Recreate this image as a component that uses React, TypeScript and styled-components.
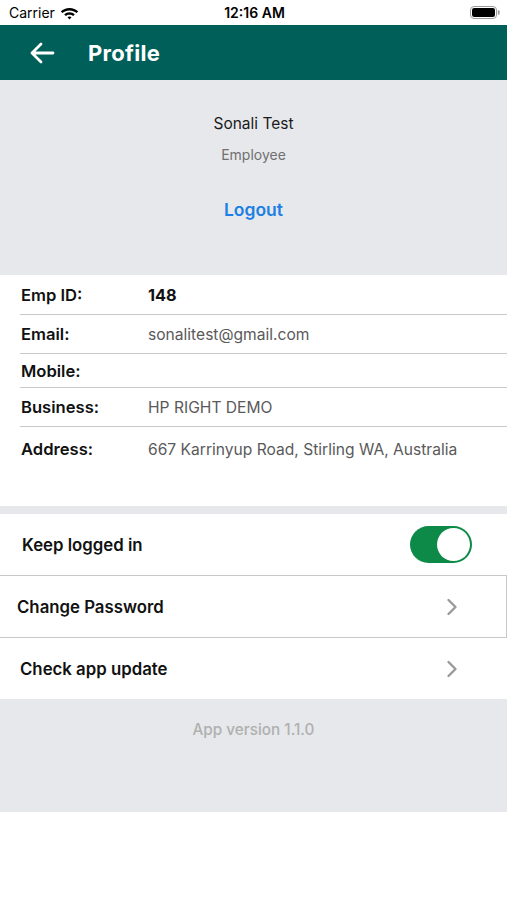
import React from "react";
import styled, { createGlobalStyle } from "styled-components";

const Global = createGlobalStyle`
  html, body { margin: 0; padding: 0; background: #ffffff; }
  body { font-family: "Inter", "Roboto", sans-serif; -webkit-font-smoothing: antialiased; }
  * { box-sizing: border-box; }
`;

const Screen = styled.div`
  width: 507px;
  min-height: 900px;
  background: #ffffff;
  display: flex;
  flex-direction: column;
`;

const StatusBar = styled.div`
  height: 25px;
  display: grid;
  grid-template-columns: 1fr auto 1fr;
  align-items: center;
  padding: 0 7px 0 9px;
  font-size: 14px;
  color: #000;
`;

const Carrier = styled.div`
  display: flex;
  align-items: center;
  gap: 5px;
  font-weight: 400;
`;

const Time = styled.div`
  font-weight: 600;
`;

const Battery = styled.div`
  justify-self: end;
  display: flex;
  align-items: center;
`;

const Header = styled.header`
  height: 55px;
  background: #005f59;
  display: flex;
  align-items: center;
  padding-left: 29px;
  gap: 33px;
  color: #fff;
`;

const Title = styled.h1`
  margin: 0;
  font-size: 22px;
  font-weight: 700;
  letter-spacing: 0.3px;
`;

const ProfileCard = styled.section`
  height: 195px;
  background: #e6e8eb;
  display: flex;
  flex-direction: column;
  align-items: center;
  padding-top: 34px;
`;

const Name = styled.div`
  font-size: 15.5px;
  color: #1a1a1a;
  line-height: 20px;
`;

const Role = styled.div`
  font-size: 14px;
  color: #707070;
  line-height: 20px;
  margin-top: 11px;
`;

const Logout = styled.button`
  margin-top: 34px;
  border: none;
  background: none;
  padding: 0;
  font-family: inherit;
  font-size: 17.5px;
  font-weight: 600;
  color: #1c7fe3;
  line-height: 22px;
`;

const InfoList = styled.section`
  height: 231px;
  background: #fff;
`;

const InfoRow = styled.div<{ $h: number; $last?: boolean }>`
  height: ${(p) => p.$h}px;
  margin-left: 20px;
  display: grid;
  grid-template-columns: 127px 1fr;
  align-items: center;
  border-bottom: ${(p) => (p.$last ? "none" : "1.5px solid #c9c9c9")};
  padding-left: 1px;
`;

const Label = styled.div`
  font-size: 16.6px;
  font-weight: 600;
  color: #111;
`;

const Value = styled.div<{ $strong?: boolean }>`
  font-size: ${(p) => (p.$strong ? "16.3px" : "15.6px")};
  font-weight: ${(p) => (p.$strong ? 700 : 400)};
  color: ${(p) => (p.$strong ? "#111" : "#5a5a5a")};
`;

const Divider = styled.div`
  height: 8px;
  background: #e6e8eb;
`;

const SettingRow = styled.div<{ $pad: number; $boxed?: boolean }>`
  height: ${(p) => (p.$boxed ? 63 : 61)}px;
  display: flex;
  align-items: center;
  justify-content: space-between;
  padding-left: ${(p) => p.$pad}px;
  padding-right: ${(p) => (p.$boxed ? 48 : 49)}px;
  border: ${(p) => (p.$boxed ? "1.5px solid #c9c9c9" : "none")};
  border-left: none;
  background: #fff;
`;

const SettingText = styled.div`
  font-size: 16.8px;
  font-weight: 600;
  color: #111;
`;

const Toggle = styled.div`
  width: 62px;
  height: 37px;
  border-radius: 19px;
  background: #0e8a48;
  display: flex;
  align-items: center;
  justify-content: flex-end;
  padding: 2px;
  margin-right: -14px;
`;

const Knob = styled.div`
  width: 33px;
  height: 33px;
  border-radius: 50%;
  background: #fff;
`;

const Footer = styled.footer`
  height: 113px;
  background: #e6e8eb;
  display: flex;
  justify-content: center;
  padding-top: 21px;
  font-size: 15.3px;
  font-weight: 500;
  color: #b0b0b0;
`;

const Chevron = () => (
  <svg width="12" height="18" viewBox="0 0 12 18">
    <path d="M2.5 2 L9.5 9 L2.5 16" fill="none" stroke="#9a9a9a" strokeWidth="2.4" strokeLinecap="round" strokeLinejoin="round" />
  </svg>
);

const BackArrow = () => (
  <svg width="26" height="24" viewBox="0 0 26 24">
    <path d="M24 12 H3 M12 3 L3 12 L12 21" fill="none" stroke="#fff" strokeWidth="2.8" strokeLinecap="round" strokeLinejoin="round" />
  </svg>
);

const Wifi = () => (
  <svg width="19" height="14" viewBox="0 0 19 14">
    <path d="M9.5 2 C6 2 3 3.3 0.8 5.4 L2.5 7.1 C4.3 5.4 6.8 4.4 9.5 4.4 C12.2 4.4 14.7 5.4 16.5 7.1 L18.2 5.4 C16 3.3 13 2 9.5 2 Z" fill="#000" />
    <path d="M9.5 6.3 C7.5 6.3 5.6 7.1 4.2 8.4 L5.9 10.1 C6.8 9.2 8.1 8.7 9.5 8.7 C10.9 8.7 12.2 9.2 13.1 10.1 L14.8 8.4 C13.4 7.1 11.5 6.3 9.5 6.3 Z" fill="#000" />
    <path d="M9.5 10.5 C8.7 10.5 8 10.8 7.5 11.3 L9.5 13.4 L11.5 11.3 C11 10.8 10.3 10.5 9.5 10.5 Z" fill="#000" />
  </svg>
);

const BatteryIcon = () => (
  <svg width="30" height="13" viewBox="0 0 30 13">
    <rect x="0.5" y="0.5" width="26" height="12" rx="3.5" fill="none" stroke="#9a9a9a" strokeWidth="1" />
    <rect x="2" y="2" width="23" height="9" rx="2.2" fill="#000" />
    <rect x="27.8" y="4.3" width="1.8" height="4.4" rx="0.9" fill="#9a9a9a" />
  </svg>
);

const info = [
  { label: "Emp ID:", value: "148", h: 40, strong: true },
  { label: "Email:", value: "sonalitest@gmail.com", h: 39 },
  { label: "Mobile:", value: "", h: 34 },
  { label: "Business:", value: "HP RIGHT DEMO", h: 39 },
  { label: "Address:", value: "667 Karrinyup Road, Stirling WA, Australia", h: 44, last: true },
];

export default function App() {
  return (
    <>
      <Global />
      <Screen>
        <StatusBar>
          <Carrier>
            Carrier <Wifi />
          </Carrier>
          <Time>12:16 AM</Time>
          <Battery>
            <BatteryIcon />
          </Battery>
        </StatusBar>
        <Header>
          <BackArrow />
          <Title>Profile</Title>
        </Header>
        <ProfileCard>
          <Name>Sonali Test</Name>
          <Role>Employee</Role>
          <Logout>Logout</Logout>
        </ProfileCard>
        <InfoList>
          {info.map((r) => (
            <InfoRow key={r.label} $h={r.h} $last={r.last}>
              <Label>{r.label}</Label>
              <Value $strong={r.strong}>{r.value}</Value>
            </InfoRow>
          ))}
        </InfoList>
        <Divider />
        <SettingRow $pad={22}>
          <SettingText>Keep logged in</SettingText>
          <Toggle>
            <Knob />
          </Toggle>
        </SettingRow>
        <SettingRow $pad={17} $boxed>
          <SettingText>Change Password</SettingText>
          <Chevron />
        </SettingRow>
        <SettingRow $pad={20}>
          <SettingText>Check app update</SettingText>
          <Chevron />
        </SettingRow>
        <Footer>App version 1.1.0</Footer>
      </Screen>
    </>
  );
}
